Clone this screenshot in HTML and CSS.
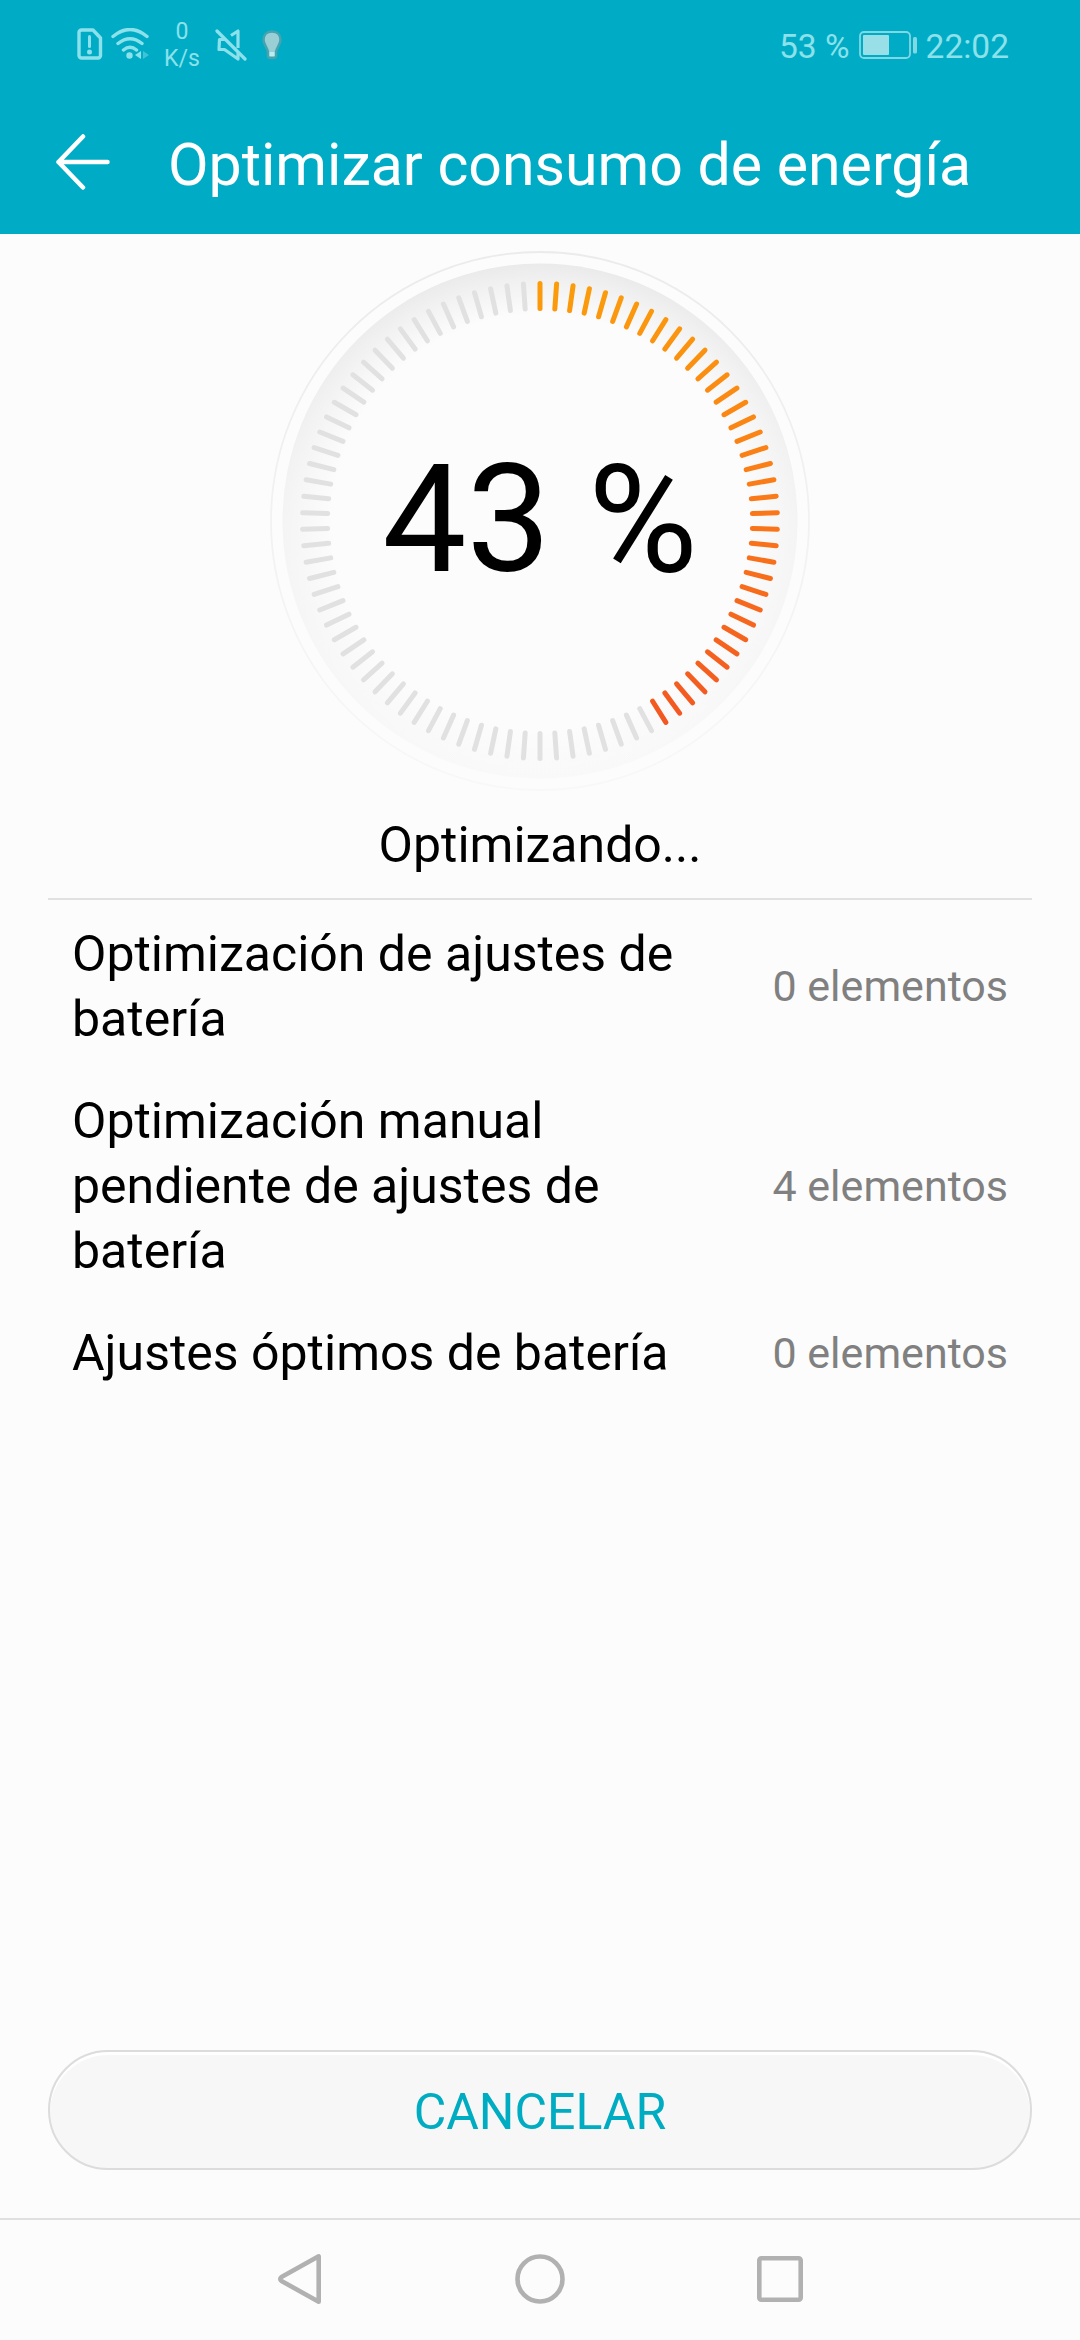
FILE: index.html
```html
<!DOCTYPE html>
<html lang="es">
<head>
    <meta charset="UTF-8">
    <meta name="viewport" content="width=device-width, initial-scale=1.0">
    <title>Optimizar consumo de energía</title>
    <link rel="stylesheet" href="styles.css">
</head>
<body>
    <div class="screen">
        <header class="header">
            <div class="status-bar">
                <svg class="status-icons" width="72" height="34" viewBox="0 0 72 34" fill="none" stroke="currentColor" stroke-width="3.4">
                    <path d="M4.5 2H16l7.5 8v17.500a2.500 2.500 0 0 1-2.500 2.500H4.500A2.500 2.500 0 0 1 2 27.500V4.500A2.500 2.500 0 0 1 4.500 2z" stroke-linejoin="round"/>
                    <path d="M12.500 8.500v10" stroke-linecap="round" stroke-width="3"/>
                    <circle cx="12.500" cy="24" r="2.500" fill="currentColor" stroke="none"/>
                    <path d="M36 8.500Q53-5.500 70 8.500M41 15.500q12-9.500 24 0M46.500 22q6.500-5.500 13 0" stroke-linecap="round"/>
                    <circle cx="52.500" cy="27.500" r="3.200" fill="currentColor" stroke="none"/>
                    <path d="M58 27l6-4v8z" fill="currentColor" stroke="none"/>
                    <path d="M66 23l6 4-6 4z" fill="currentColor" stroke="none" opacity=".45"/>
                </svg>
                <div class="net-speed">
                    <span>0</span>
                    <span>K/s</span>
                </div>
                <svg class="mute-icon" width="32" height="34" viewBox="0 0 32 34" fill="none" stroke="currentColor" stroke-width="3.200" stroke-linejoin="round">
                    <path d="M16 7.500L23 3v17M10.500 11.500H4.500L4 21.500h5.500L23 31v-6"/>
                    <path d="M2 3l28 28" stroke-linecap="round"/>
                </svg>
                <svg class="bulb-icon" width="22" height="32" viewBox="0 0 22 32">
                    <path d="M11 2.500C5.500 2.500 2.500 6 2.500 11c0 4.500 4 7.500 4.500 12v3.500q0 2.500 2 2.500h4q2 0 2-2.500V23c.5-4.500 4.500-7.500 4.500-12 0-5-3-8.500-8.500-8.500z" fill="#9bcfd6" stroke="#45a4b0" stroke-width="2.500"/>
                    <path d="M8.500 23h5v4h-5z" fill="#b9edf2"/>
                </svg>
                <span class="battery-text">53 %</span>
                <svg class="battery-icon" width="59" height="28" viewBox="0 0 59 28" fill="none">
                    <rect x="1" y="1" width="50" height="26" rx="4" stroke="#80d8e2" stroke-width="1.800"/>
                    <rect x="4" y="4" width="26" height="20" rx="1" fill="#99dfe8"/>
                    <rect x="54" y="6" width="4" height="16.500" rx="1.500" fill="#80d8e2"/>
                </svg>
                <span class="clock">22:02</span>
            </div>
            <div class="title-bar">
                <svg class="back-icon" width="54" height="56" viewBox="0 0 54 56" fill="none" stroke="#fff" stroke-width="4.500" stroke-linecap="round" stroke-linejoin="round">
                    <path d="M27 2.500L2.500 28 27 53.500M2.500 28h49"/>
                </svg>
                <h1 class="title">Optimizar consumo de energía</h1>
            </div>
        </header>

        <main class="content">
            <div class="gauge">
                <svg class="dial" width="540" height="540" viewBox="-270 -270 540 540">
                    <defs>
                        <linearGradient id="tickColor" gradientUnits="userSpaceOnUse" x1="0" y1="-240" x2="0" y2="210">
                            <stop offset="0" stop-color="#fb9d0b"/>
                            <stop offset=".5" stop-color="#fa7819"/>
                            <stop offset="1" stop-color="#f25622"/>
                        </linearGradient>
                        <linearGradient id="ringColor" x1="0" y1="0" x2="0" y2="1">
                            <stop offset="0" stop-color="#ebebeb"/>
                            <stop offset="1" stop-color="#f8f8f8"/>
                        </linearGradient>
                        <linearGradient id="discColor" x1="0" y1="0" x2="0" y2="1">
                            <stop offset="0" stop-color="#eaeaea"/>
                            <stop offset=".5" stop-color="#f4f4f4"/>
                            <stop offset="1" stop-color="#f9f9f9"/>
                        </linearGradient>
                        <radialGradient id="discCenter">
                            <stop offset=".8" stop-color="#fcfcfc"/>
                            <stop offset="1" stop-color="#fcfcfc" stop-opacity="0"/>
                        </radialGradient>
                    </defs>
                    <circle r="269" fill="none" stroke="url(#ringColor)" stroke-width="1.800"/>
                    <circle r="257.500" fill="url(#discColor)"/>
                    <circle r="258" fill="url(#discCenter)"/>
                    <g id="ticks" stroke-width="5" stroke-linecap="round"></g>
                </svg>
                <div class="percent">43 %</div>
            </div>
            <p class="state">Optimizando...</p>

            <ul class="list">
                <li class="item">
                    <span class="item-name">Optimización de ajustes de batería</span>
                    <span class="item-count">0 elementos</span>
                </li>
                <li class="item">
                    <span class="item-name">Optimización manual pendiente de ajustes de batería</span>
                    <span class="item-count">4 elementos</span>
                </li>
                <li class="item">
                    <span class="item-name">Ajustes óptimos de batería</span>
                    <span class="item-count">0 elementos</span>
                </li>
            </ul>
        </main>

        <button class="cancel-button">CANCELAR</button>

        <nav class="nav-bar">
            <svg width="52" height="52" viewBox="0 0 52 52"><path d="M44.700 3.300v45.400L7.500 28q-2.500-2 0-4z"/></svg>
            <svg width="52" height="52" viewBox="0 0 52 52"><circle cx="26" cy="26" r="22.500"/></svg>
            <svg width="52" height="52" viewBox="0 0 52 52"><rect x="5.300" y="5.300" width="41.400" height="41.400" rx="2"/></svg>
        </nav>
    </div>

    <script>
        // 90 ticks around the dial, the first ones are lit
        const total = 90;
        const lit = Math.floor(total * 43 / 100);
        const ticks = document.getElementById('ticks');

        for (let i = 0; i < total; i++) {
            const angle = i * 2 * Math.PI / total;
            const line = document.createElementNS('http://www.w3.org/2000/svg', 'line');
            line.setAttribute('x1', Math.sin(angle) * 212.5);
            line.setAttribute('y1', -Math.cos(angle) * 212.5);
            line.setAttribute('x2', Math.sin(angle) * 237.5);
            line.setAttribute('y2', -Math.cos(angle) * 237.5);
            line.setAttribute('stroke', i < lit ? 'url(#tickColor)' : '#e1e1e1');
            ticks.appendChild(line);
        }
    </script>
</body>
</html>
```
FILE: styles.css
```css
* {
    box-sizing: border-box;
}
body {
    font-family: Roboto, sans-serif;
    background-color: #fcfcfc;
    color: #000;
    margin: 0;
    padding: 0;
}
.screen {
    width: 1080px;
    height: 2340px;
    display: flex;
    flex-direction: column;
    overflow: hidden;
}
.header {
    height: 234px;
    background-color: #00acc5;
    color: #fff;
}
.status-bar {
    height: 90px;
    padding: 0 71px 0 77px;
    display: flex;
    align-items: center;
    color: #8ce1eb;
    font-size: 33.500px;
}
.status-icons {
    margin-top: -1px;
}
.net-speed {
    width: 40px;
    margin-left: 13px;
    display: flex;
    flex-direction: column;
    align-items: center;
    font-size: 23px;
    line-height: 27px;
}
.mute-icon {
    margin-left: 13px;
}
.bulb-icon {
    margin-left: 14px;
}
.battery-text {
    margin-left: auto;
    padding-top: 2px;
}
.battery-icon {
    margin: 0 8px 0 9px;
}
.clock {
    padding-top: 2px;
}
.title-bar {
    height: 144px;
    padding-left: 56px;
    display: flex;
    align-items: center;
}
.back-icon {
    margin-top: -1px;
}
.title {
    margin: 6px 0 0 58px;
    font-size: 59px;
    font-weight: 400;
    line-height: 70px;
}
.content {
    flex: 1;
    padding: 17px 48px 0;
}
.gauge {
    display: grid;
    place-items: center;
}
.dial,
.percent {
    grid-area: 1 / 1;
}
.percent {
    font-size: 150px;
    line-height: 176px;
    padding-bottom: 2px;
}
.state {
    margin: 22px 0 0;
    height: 85px;
    text-align: center;
    font-size: 50px;
    line-height: 65px;
}
.list {
    list-style: none;
    margin: 0;
    padding: 3px 0 0;
    border-top: 2px solid #e1e1e1;
}
.item {
    display: flex;
    align-items: center;
    justify-content: space-between;
    padding: 17px 24px 18px;
}
.item-name {
    width: 620px;
    padding-top: 2px;
    font-size: 50px;
    line-height: 65px;
}
.item-count {
    color: #808080;
    font-size: 43px;
}
.cancel-button {
    height: 120px;
    margin: 0 48px 48px;
    padding: 3px 0 0;
    border: 2px solid #dcdcdc;
    border-radius: 60px;
    background-color: #f7f7f7;
    box-shadow: inset 0 3px 1px #fff;
    color: #00acc1;
    font-family: inherit;
    font-size: 50px;
}
.nav-bar {
    height: 122px;
    border-top: 2px solid #e0e0e0;
    display: flex;
    justify-content: center;
    gap: 188px;
    padding-top: 33px;
}
.nav-bar svg {
    fill: none;
    stroke: #b1b1b1;
    stroke-width: 4.600;
    stroke-linejoin: round;
}
```
